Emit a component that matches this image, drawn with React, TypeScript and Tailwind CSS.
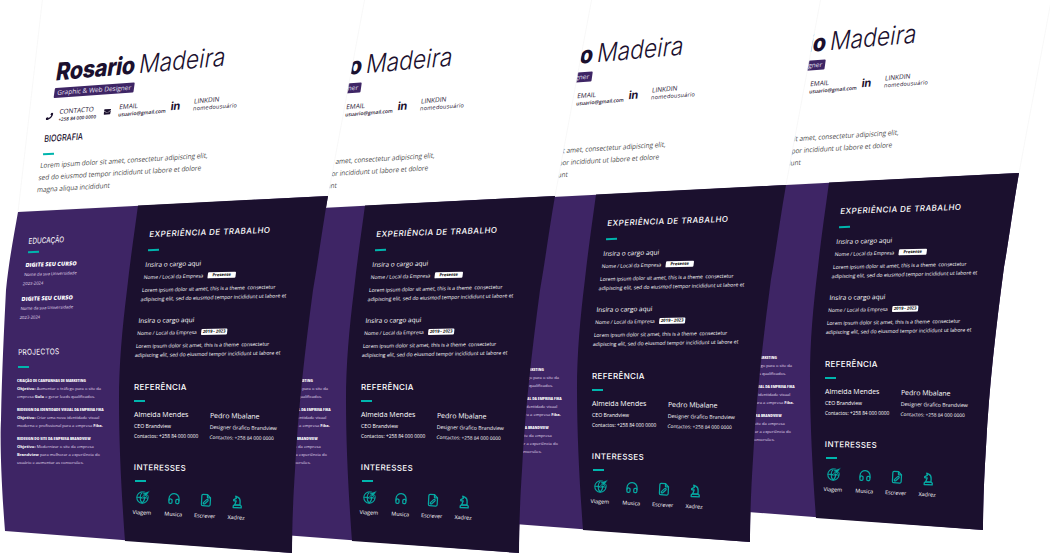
import { FaEnvelope, FaPhoneAlt } from "react-icons/fa";
import { TbChessKnight, TbFilePencil, TbHeadphones } from "react-icons/tb";

function GlobePlane() {
  return (
    <svg width="15" height="15" viewBox="0 0 24 24" fill="none" stroke="currentColor" strokeWidth="1.800">
      <circle cx="11" cy="13" r="9" />
      <path d="M2 13h18M11 4c-5 5-5 13 0 18M11 4c5 5 5 13 0 18" />
      <path d="M23 1l-9 4-3-1-1 1 3 3-3 4 1 1 4-3 3 3 1-1-1-3z" fill="currentColor" stroke="#1b102e" strokeWidth="1" />
    </svg>
  );
}

const interests = [
  { label: "Viagem", icon: <GlobePlane /> },
  { label: "Musica", icon: <TbHeadphones size={15} /> },
  { label: "Escrever", icon: <TbFilePencil size={15} /> },
  { label: "Xadrez", icon: <TbChessKnight size={16} /> },
];

function Bar({ className = "" }: { className?: string }) {
  return <div className={`h-[1.5px] w-[11px] bg-[#00b5ad] ${className}`} />;
}

function Contact({ title, value, className }: { title: string; value: string; className: string }) {
  return (
    <div className="whitespace-nowrap text-[#1b102e]">
      <div className="text-[6.5px] leading-[8px]">{title}</div>
      <div className={`leading-[7px] ${className}`}>{value}</div>
    </div>
  );
}

function Course({ className }: { className: string }) {
  return (
    <div className={`origin-top-left whitespace-nowrap text-white ${className}`}>
      <div className="text-[5.6px] font-extrabold leading-[9px]">DIGITE SEU CURSO</div>
      <div className="text-[4.2px] leading-[9px] text-[#e4dff0]">Nome da sua Universidade</div>
      <div className="text-[4.2px] leading-[9px] text-[#e4dff0]">2023-2024</div>
    </div>
  );
}

function Job({ tag, pill, className }: { tag: string; pill: string; className: string }) {
  return (
    <div className={`flex origin-top-left flex-col whitespace-nowrap text-white ${className}`}>
      <div className="text-[6.5px] leading-[10px]">Insira o cargo aqui</div>
      <div className="mt-[3px] flex items-center gap-[4px] text-[5px] leading-[8px]">
        Nome / Local da Empresa
        <span className={`rounded-[1px] bg-white text-[4.2px] font-bold leading-[6.5px] text-black ${pill}`}>{tag}</span>
      </div>
      <div className="mt-[4.500px] text-[5.100px] leading-[9px]">
        Lorem ipsum dolor sit amet, this is a theme&nbsp; consectetur
        <br />
        adipiscing elit, sed do eiusmod tempor incididunt ut labore et
      </div>
    </div>
  );
}

function Reference({ name, role, className }: { name: string; role: string; className: string }) {
  return (
    <div className={`origin-top-left whitespace-nowrap text-white ${className}`}>
      <div className="text-[7px] leading-[10px]">{name}</div>
      <div className="mt-[1px] text-[5.2px] leading-[10px]">{role}</div>
      <div className="text-[4.8px] leading-[10px]">Contactos: +258 84 000 0000</div>
    </div>
  );
}

function ProjectTitle({ children }: { children: string }) {
  return <div className="text-[3.300px] font-extrabold leading-[8px] text-white">{children}</div>;
}

function ResumePage({ offset, z }: { offset: string; z: string }) {
  return (
    <div className={`absolute inset-0 ${offset} ${z}`}>
      {/* bent sheet of paper */}
      <svg width="1050" height="554" viewBox="0 0 1050 554" className="absolute left-0 top-0 overflow-visible">
        <path d="M18 212 L47 -40 L372 -40 L328 196 Z" fill="#ffffff" stroke="#f1f1f1" strokeWidth="0.5" />
        <path
          d="M18 212 L328 196 C322 230 318 262 313 290 C305 350 298 410 295 470 C293 500 292 530 292 553 L5 531 C1 480 0 440 1 420 C2 370 4 330 6 290 C9 260 14 235 18 212 Z"
          fill="#3e2565"
        />
        <path
          d="M138 205.500 L328 196 C322 230 318 262 313 290 C305 350 298 410 295 470 C293 500 292 530 292 553 L125 541 C122 500 119 450 119 400 C119 365 122 330 127 290 C130 262 134 235 138 205.500 Z"
          fill="#1b102e"
        />
      </svg>

      {/* header */}
      <div className="absolute left-[37px] top-[54px] flex flex-col items-start text-[#1b102e]">
        <div className="ml-[22px] mt-[2px] h-[30px] origin-top-left rotate-[-5deg] scale-x-[0.9] skew-x-[-16deg] whitespace-nowrap font-['Inter',sans-serif] leading-[30px]">
          <span className="text-[24px] font-extrabold tracking-[-0.3px]">Rosario</span>{" "}
          <span className="text-[25.5px] font-light">Madeira</span>
        </div>
        <div className="ml-[18px] mt-[2px] origin-top-left rotate-[-4deg] skew-x-[-12deg] whitespace-nowrap rounded-[1px] bg-[#3e2565] px-[3px] text-[6.5px] leading-[10px] text-[#e8e2f2]">
          Graphic &amp; Web Designer
        </div>

        <div className="ml-[10px] mt-[10.500px] flex h-[15px] origin-top-left rotate-[-4.500deg] skew-x-[-12deg] items-center">
          <FaPhoneAlt size={7} className="mr-[6px] shrink-0 scale-x-[-1]" />
          <div className="mr-[7px] w-[38px]">
            <Contact title="CONTACTO" value="+258 84 000 0000" className="text-[4.600px] font-semibold" />
          </div>
          <FaEnvelope size={7} className="mr-[8px] shrink-0" />
          <div className="mr-[5px] w-[47px]">
            <Contact title="EMAIL" value="usuario@gmail.com" className="text-[5px] font-semibold" />
          </div>
          <div className="mr-[15px] w-[8px] font-['Inter',sans-serif] text-[11px] font-bold leading-[13px]">in</div>
          <Contact title="LINKDIN" value="nomedousuário" className="text-[5.6px] font-medium tracking-[0.2px]" />
        </div>

        <div className="ml-[8px] mt-[9.500px] h-[12px] origin-top-left rotate-[-4deg] scale-x-[0.8] skew-x-[-12deg] font-['Inter',sans-serif] text-[9px] font-medium leading-[12px]">
          BIOGRAFIA
        </div>
        <Bar className="ml-[6px] mt-[8px] rotate-[-3deg]" />
        <div className="ml-[4px] mt-[5.500px] origin-top-left rotate-[-3.500deg] scale-x-[0.93] skew-x-[-12deg] whitespace-nowrap text-[7px] leading-[12px] text-[#4a4a4a]">
          <div>Lorem ipsum dolor sit amet, consectetur adipiscing elit,</div>
          <div>sed do eiusmod tempor incididunt ut labore et dolore</div>
          <div>magna aliqua incididunt</div>
        </div>
      </div>

      {/* purple column */}
      <div className="absolute left-[16px] top-[236px] flex flex-col items-start">
        <div className="ml-[13px] h-[10px] origin-top-left rotate-[-3deg] scale-x-[0.8] skew-x-[-10deg] font-['Inter',sans-serif] text-[8px] leading-[10px] text-white">
          EDUCAÇÃO
        </div>
        <Bar className="ml-[12px] mt-[5px] rotate-[-2deg]" />
        <Course className="ml-[10px] mt-[8.500px] rotate-[-2deg] skew-x-[-10deg]" />
        <Course className="ml-[6px] mt-[7px] rotate-[-2deg] skew-x-[-8deg]" />
        <div className="ml-[2px] mt-[25px] h-[10px] origin-top-left rotate-[-1deg] scale-x-[0.82] font-['Inter',sans-serif] text-[8px] leading-[10px] tracking-[0.3px] text-white">
          PROJECTOS
        </div>
        <Bar className="ml-[2px] mt-[9px]" />
        <div className="ml-[1px] mt-[9.500px] flex flex-col gap-[6px] whitespace-nowrap text-[4.100px] leading-[7.600px] text-[#e4dff0]">
          <div>
            <ProjectTitle>CRIAÇÃO DE CAMPANHAS DE MARKETING</ProjectTitle>
            <div>
              <b className="font-bold text-white">Objetivo:</b> Aumentar o tráfego para o site da
            </div>
            <div>
              empresa <b className="font-bold text-white">Golo</b> e gerar leads qualificados.
            </div>
          </div>
          <div>
            <ProjectTitle>REDESIGN DA IDENTIDADE VISUAL DA EMPRESA FIKA</ProjectTitle>
            <div>
              <b className="font-bold text-white">Objetivo:</b> Criar uma nova identidade visual
            </div>
            <div>
              moderna e profissional para a empresa <b className="font-bold text-white">Fika.</b>
            </div>
          </div>
          <div>
            <ProjectTitle>REDESIGN DO SITE DA EMPRESA BRANDVIEW</ProjectTitle>
            <div>
              <b className="font-bold text-white">Objetivo:</b> Modernizar o site da empresa
            </div>
            <div>
              <b className="font-bold text-white">Brandview</b> para melhorar a experiência do
            </div>
            <div>usuário e aumentar as conversões.</div>
          </div>
        </div>
      </div>

      {/* dark column */}
      <div className="absolute left-[134px] top-[229px] flex flex-col items-start">
        <div className="ml-[16px] h-[10px] origin-top-left rotate-[-2deg] skew-x-[-9deg] whitespace-nowrap font-['Inter',sans-serif] text-[8px] font-medium leading-[10px] tracking-[0.45px] text-white">
          EXPERIÊNCIA DE TRABALHO
        </div>
        <Bar className="ml-[14px] mt-[10px] rotate-[-2deg]" />
        <Job tag="Presente" pill="px-[5px]" className="ml-[12px] mt-[9.500px] rotate-[-1.500deg] skew-x-[-9deg]" />
        <Job tag="2019 - 2023" pill="px-[2px]" className="ml-[5px] mt-[12.500px] rotate-[-1deg] skew-x-[-7deg]" />

        <div className="mt-[22.500px] h-[10px] font-['Inter',sans-serif] text-[8px] font-medium leading-[10px] tracking-[0.35px] text-white">
          REFERÊNCIA
        </div>
        <Bar className="mt-[8px]" />
        <div className="mt-[8.500px] flex">
          <Reference name="Almeida Mendes" role="CEO Brandview" className="w-[76px]" />
          <Reference name="Pedro Mbalane" role="Designer Grafico Brandview" className="mt-[1px] rotate-[1deg]" />
        </div>

        <div className="mt-[20px] h-[10px] origin-top-left rotate-[1deg] font-['Inter',sans-serif] text-[8px] font-medium leading-[10px] tracking-[0.35px] text-white">
          INTERESSES
        </div>
        <Bar className="ml-[1px] mt-[8px]" />
        <div className="ml-[1px] mt-[7.500px] flex origin-top-left rotate-[3deg] gap-[15.500px]">
          {interests.map((item) => (
            <div key={item.label} className="flex h-[28px] w-[16px] flex-col items-center">
              <span className="h-[15px] text-[#06a8a2]">{item.icon}</span>
              <span className="mt-[3.500px] whitespace-nowrap text-[5.4px] leading-[8px] text-white">{item.label}</span>
            </div>
          ))}
        </div>
      </div>
    </div>
  );
}

export default function App() {
  return (
    <div className="relative h-[554px] w-[1050px] overflow-hidden bg-white font-['Open_Sans',sans-serif]">
      <ResumePage offset="translate-x-[691px] translate-y-[-23px]" z="z-10" />
      <ResumePage offset="translate-x-[458px] translate-y-[-11px]" z="z-20" />
      <ResumePage offset="translate-x-[227px]" z="z-30" />
      <ResumePage offset="" z="z-40" />
    </div>
  );
}
